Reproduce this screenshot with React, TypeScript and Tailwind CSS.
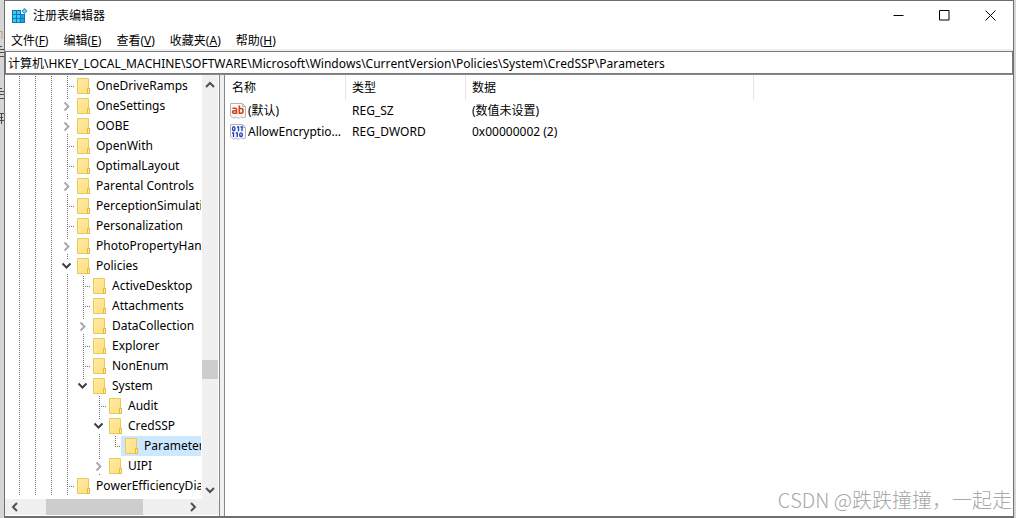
import type { ReactNode } from "react";
import { clsx } from "clsx";

type Guide = "line" | "tee" | "elbow" | "blank" | "closed" | "open" | "openLast";

type TreeItem = {
  name: string;
  guides: Guide[];
  selected?: boolean;
};

const treeItems: TreeItem[] = [
  { name: "OneDriveRamps", guides: ["tee"] },
  { name: "OneSettings", guides: ["closed"] },
  { name: "OOBE", guides: ["closed"] },
  { name: "OpenWith", guides: ["tee"] },
  { name: "OptimalLayout", guides: ["tee"] },
  { name: "Parental Controls", guides: ["closed"] },
  { name: "PerceptionSimulationExtensions", guides: ["tee"] },
  { name: "Personalization", guides: ["tee"] },
  { name: "PhotoPropertyHandler", guides: ["closed"] },
  { name: "Policies", guides: ["open"] },
  { name: "ActiveDesktop", guides: ["line", "tee"] },
  { name: "Attachments", guides: ["line", "tee"] },
  { name: "DataCollection", guides: ["line", "closed"] },
  { name: "Explorer", guides: ["line", "tee"] },
  { name: "NonEnum", guides: ["line", "tee"] },
  { name: "System", guides: ["line", "openLast"] },
  { name: "Audit", guides: ["line", "blank", "tee"] },
  { name: "CredSSP", guides: ["line", "blank", "open"] },
  { name: "Parameters", guides: ["line", "blank", "line", "elbow"], selected: true },
  { name: "UIPI", guides: ["line", "blank", "closed"] },
  { name: "PowerEfficiencyDiagnostics", guides: ["tee"] },
];

const menus = [
  { label: "文件", hotkey: "F" },
  { label: "编辑", hotkey: "E" },
  { label: "查看", hotkey: "V" },
  { label: "收藏夹", hotkey: "A" },
  { label: "帮助", hotkey: "H" },
];

const values = [
  { name: "(默认)", type: "REG_SZ", data: "(数值未设置)", kind: "string" },
  { name: "AllowEncryptionOracle", type: "REG_DWORD", data: "0x00000002 (2)", kind: "binary" },
];

const guidePaths: Record<Guide, string[]> = {
  line: ["M10.5 0V20"],
  tee: ["M10.5 0V20", "M12 10.5H17"],
  elbow: ["M10.5 0V11", "M12 10.5H17"],
  blank: [],
  closed: ["M10.5 0V3", "M10.5 18V20"],
  open: ["M10.5 0V3", "M10.5 18V20"],
  openLast: ["M10.5 0V3"],
};

function GuideCell({ guide }: { guide: Guide }) {
  const expandable = guide === "closed" || guide === "open" || guide === "openLast";
  const drawing = (
    <svg width="16" height="20" viewBox="0 0 16 20" fill="none" className="block overflow-visible">
      {guidePaths[guide].map((d) => (
        <path key={d} d={d} stroke="#6d6d6d" strokeDasharray="1 1" />
      ))}
      {guide === "closed" && <path d="M7.5 6.5L11.5 10.5L7.5 14.5" stroke="#a6a6a6" strokeWidth="1.8" />}
      {(guide === "open" || guide === "openLast") && (
        <path d="M5.5 7.5L9.5 11.5L13.5 7.5" stroke="#404040" strokeWidth="2" />
      )}
    </svg>
  );

  if (!expandable) return <span className="shrink-0">{drawing}</span>;
  return (
    <button type="button" aria-label={guide === "closed" ? "展开" : "折叠"} className="shrink-0">
      {drawing}
    </button>
  );
}

function FolderIcon() {
  return (
    <svg width="13" height="16" viewBox="0 0 13 16" className="shrink-0">
      <defs>
        <linearGradient id="folder" x1="0" y1="0" x2="1" y2="1">
          <stop offset="0" stopColor="#ffeba6" />
          <stop offset="1" stopColor="#ffdf7c" />
        </linearGradient>
      </defs>
      <path d="M0.5 0.5H11.5V10.5H12.5V15.5H0.5Z" fill="url(#folder)" stroke="#ebc85a" />
      <path d="M10.5 15.5V10.5H12.5V15.5Z" fill="#ffe9a0" stroke="#e3ba3f" />
    </svg>
  );
}

function RegistryIcon() {
  return (
    <svg width="16" height="16" viewBox="0 0 16 16">
      <path d="M0 2H9V6H13V15H0Z" fill="#0a78b8" />
      <path
        d="M1 3H4V6H1ZM5 3H8V6H5ZM1 7H4V10H1ZM5 7H8V10H5ZM9 7H12V10H9ZM1 11H4V14H1ZM5 11H8V14H5ZM9 11H12V14H9Z"
        fill="#45c4f6"
      />
      <path d="M9 11H12V14H9ZM9 7H12V10H9Z" fill="#1ba5e0" />
      <path d="M12.5 0L15.5 3L12.5 6L9.5 3Z" fill="#2a8dc4" />
      <path d="M12.5 1.2L14.3 3L12.5 4.8L10.7 3Z" fill="#6fd4fa" />
    </svg>
  );
}

function ValueIcon({ kind }: { kind: string }) {
  return (
    <svg width="16" height="16" viewBox="0 0 16 16" fill="none" className="shrink-0">
      <path
        d="M0.5 0.5H12.5L15.5 3.5V14L13 15L11 13.5L9 15.5L6 14L3.5 15L0.5 13Z"
        fill="#fafafa"
        stroke="#b4b4b4"
      />
      <path d="M12.5 0.5V3.5H15.5" stroke="#b4b4b4" />
      {kind === "string" ? (
        <g stroke="#d2421c" strokeWidth="1.6">
          <path d="M2.5 5.3H5.5Q6.5 5.3 6.5 6.5V11M6.5 7.8H4Q2.500 7.8 2.500 9.1Q2.500 10.3 4 10.3H6.5" />
          <path d="M9.3 2.5V11M9.3 5.5H11.5Q13 5.5 13 7.8Q13 10.2 11.5 10.2H9.3" />
        </g>
      ) : (
        <g stroke="#2444cc" strokeWidth="1.4">
          <path d="M3.7 2.7Q5 2.700 5 4.700Q5 6.700 3.700 6.700Q2.500 6.700 2.500 4.700Q2.500 2.700 3.700 2.700Z" />
          <path d="M7 3H8.500V7.300M10.500 3H12V7.300" />
          <path d="M2 9H3.500V13M5.800 9H7.300V13" />
          <path d="M11 8.900Q12.400 8.900 12.400 10.700Q12.400 12.500 11 12.500Q9.700 12.500 9.700 10.700Q9.700 8.900 11 8.900Z" />
        </g>
      )}
    </svg>
  );
}

const arrowPaths = {
  up: "M4 10L8 6L12 10",
  down: "M4 6L8 10L12 6",
  left: "M10 4L6 8L10 12",
  right: "M6 4L10 8L6 12",
};

function ScrollButton({ direction, label }: { direction: keyof typeof arrowPaths; label: string }) {
  return (
    <button type="button" aria-label={label} className="shrink-0">
      <svg width="16" height="16" viewBox="0 0 16 16" fill="none" className="block">
        <path d={arrowPaths[direction]} stroke="#505050" strokeWidth="2" />
      </svg>
    </button>
  );
}

function CaptionButton({ label, children }: { label: string; children: ReactNode }) {
  return (
    <button type="button" aria-label={label} className="flex w-[46px] items-center justify-center hover:bg-gray-200">
      <svg width="11" height="11" viewBox="0 0 11 11" fill="none" stroke="#000">
        {children}
      </svg>
    </button>
  );
}

function TitleBar() {
  return (
    <header className="flex h-[29px] shrink-0 justify-between">
      <div className="flex items-center gap-[5px] pl-[7px]">
        <RegistryIcon />
        <h1>注册表编辑器</h1>
      </div>
      <div className="flex">
        <CaptionButton label="最小化">
          <path d="M0.5 5.5H10.5" />
        </CaptionButton>
        <CaptionButton label="最大化">
          <path d="M0.5 0.5H10V10H0.5Z" />
        </CaptionButton>
        <CaptionButton label="关闭">
          <path d="M0.5 0.5L10.5 10.5M10.5 0.5L0.5 10.5" />
        </CaptionButton>
      </div>
    </header>
  );
}

function Tree() {
  return (
    <nav className="flex w-[215px] shrink-0 flex-col border-r border-[#828790] bg-white">
      <div className="flex min-h-0 flex-1 pr-px">
        <ul className="mr-px min-w-0 flex-1 overflow-hidden pt-px pl-1">
          {treeItems.map((item) => (
            <li key={item.name} className="flex h-5 whitespace-nowrap">
              {(["line", "line", "line", ...item.guides] as Guide[]).map((guide, i) => (
                <GuideCell key={i} guide={guide} />
              ))}
              <span className={clsx("flex flex-1 items-center gap-1.5 pl-1", item.selected && "bg-[#cce8ff]")}>
                <FolderIcon />
                {item.name}
              </span>
            </li>
          ))}
        </ul>
        <div className="flex w-4 shrink-0 flex-col bg-[#f0f0f0] pt-0.5 pb-px">
          <ScrollButton direction="up" label="向上滚动" />
          <div className="flex flex-1 flex-col">
            <div className="flex-[267]" />
            <div className="h-[19px] bg-[#cdcdcd]" />
            <div className="flex-[103]" />
          </div>
          <ScrollButton direction="down" label="向下滚动" />
        </div>
      </div>
      <div className="mb-px flex h-4 bg-[#f0f0f0] pr-[18px] pl-0.5">
        <ScrollButton direction="left" label="向左滚动" />
        <div className="flex flex-1">
          <div className="flex-[24]" />
          <div className="w-[97px] bg-[#cdcdcd]" />
          <div className="flex-[43]" />
        </div>
        <ScrollButton direction="right" label="向右滚动" />
      </div>
    </nav>
  );
}

function ValueTable() {
  return (
    <section className="min-w-0 flex-1 overflow-hidden border-l border-[#828790] bg-white">
      <table className="w-[529px] table-fixed border-separate border-spacing-0 text-left">
        <thead>
          <tr className="h-[25px]">
            <th className="w-[121px] border-r border-[#e5e5e5] pl-[7px] font-normal">名称</th>
            <th className="w-[120px] border-r border-[#e5e5e5] pl-1.5 font-normal">类型</th>
            <th className="border-r border-[#e5e5e5] pl-1.5 font-normal">数据</th>
          </tr>
        </thead>
        <tbody>
          {values.map((value) => (
            <tr key={value.name} className="h-[21px]">
              <td className="pr-0.5 pl-[5px]">
                <div className="flex items-center gap-0.5">
                  <ValueIcon kind={value.kind} />
                  <span className="truncate">{value.name}</span>
                </div>
              </td>
              <td className="pl-1.5">{value.type}</td>
              <td className="pl-1.5">{value.data}</td>
            </tr>
          ))}
        </tbody>
      </table>
    </section>
  );
}

// slivers of the page that lies behind the window
function Backdrop() {
  return (
    <svg width="4" height="130" viewBox="0 0 4 130" fill="none" className="absolute top-0 left-0" aria-hidden="true">
      <path d="M0 31.5H2V39" stroke="#c99a62" />
      <path d="M0 46.5H2M0 49.500H4M0 52.500H4M0 56.500H4" stroke="#4a4a4a" />
      <path d="M0 88.500H2M0 91.500H4M0 94.500H4M0 98.500H4" stroke="#4a4a4a" />
      <path d="M0 113.500H4M0 117.500H3M0 120.500H4M1.500 113V124" stroke="#4a4a4a" />
    </svg>
  );
}

export default function App() {
  return (
    <div className="relative flex h-screen flex-col bg-[#d6d6d6] pr-0.5 pl-1 font-['Noto_Sans','Noto_Sans_CJK_SC',sans-serif] text-[12px] leading-4 text-black [font-kerning:none]">
      <Backdrop />
      <main className="flex min-h-0 flex-1 flex-col border border-b-2 border-[#6e6e6e] bg-white">
        <TitleBar />
        <div className="flex h-[19px] shrink-0 items-end gap-[15px] pl-1.5">
          {menus.map((menu) => (
            <button key={menu.label} type="button">
              {menu.label}(<span className="underline">{menu.hotkey}</span>)
            </button>
          ))}
        </div>
        <div className="h-0.5 shrink-0 bg-[#f0f0f0]" />
        <input
          aria-label="地址"
          className="h-[23px] w-full shrink-0 border border-[#7a7a7a] px-0.5 outline-none"
          defaultValue="计算机\HKEY_LOCAL_MACHINE\SOFTWARE\Microsoft\Windows\CurrentVersion\Policies\System\CredSSP\Parameters"
        />
        <div className="flex min-h-0 flex-1 gap-1 border-t border-[#828790] bg-[#f0f0f0]">
          <Tree />
          <ValueTable />
        </div>
      </main>
      <p className="absolute right-1 bottom-1.5 font-['Noto_Sans_CJK_SC',sans-serif] text-[20px] leading-6 font-light text-[#a8a8a8]">
        CSDN @跌跌撞撞，一起走
      </p>
    </div>
  );
}
